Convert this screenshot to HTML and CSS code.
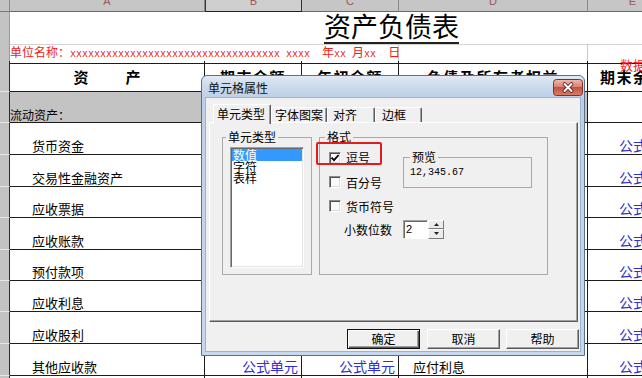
FILE: index.html
```html
<!DOCTYPE html>
<html lang="zh-CN">
<head>
<meta charset="utf-8">
<title>资产负债表</title>
<link rel="stylesheet" href="styles.css">
</head>
<body>
<div class="sheet">
  <div class="row hdr">
    <div class="corner"></div>
    <div class="ch"><span>A</span></div>
    <div class="ch ch-sel"><span>B</span></div>
    <div class="ch"><span>C</span></div>
    <div class="ch"><span>D</span></div>
    <div class="ch"><span>E</span></div>
  </div>
  <div class="row r-title">
    <div class="rh rh-top"></div>
    <div class="title-cell"><span class="title">资产负债表</span></div>
  </div>
  <div class="row r-unit">
    <div class="rh rh-top"></div>
    <div class="unit-cell">单位名称：<span class="mono">xxxxxxxxxxxxxxxxxxxxxxxxxxxxxxxxxxx xxxx  </span>年<span class="mono">xx </span>月<span class="mono">xx  </span>日</div>
    <div class="gc"></div>
    <div class="gc gc-e"></div>
  </div>
  <div class="row r-head">
    <div class="rh"></div>
    <div class="hc hc-asset"><span>资</span><span>产</span></div>
    <div class="hc">期末余额</div>
    <div class="hc">年初余额</div>
    <div class="hc">负债及所有者权益</div>
    <div class="hc hc-e">期末余额<span class="tag">数据</span></div>
  </div>
  <div class="row r-sec">
    <div class="rh"></div>
    <div class="sec">流动资产：</div>
    <div class="c c-e"></div>
  </div>
  <div class="row d h32">
    <div class="rh"></div>
    <div class="c name">货币资金</div>
    <div class="c num"></div>
    <div class="c num"></div>
    <div class="c name2"></div>
    <div class="c num c-e">公式单元</div>
  </div>
  <div class="row d h32">
    <div class="rh"></div>
    <div class="c name">交易性金融资产</div>
    <div class="c num"></div>
    <div class="c num"></div>
    <div class="c name2"></div>
    <div class="c num c-e">公式单元</div>
  </div>
  <div class="row d h31">
    <div class="rh"></div>
    <div class="c name">应收票据</div>
    <div class="c num"></div>
    <div class="c num"></div>
    <div class="c name2"></div>
    <div class="c num c-e">公式单元</div>
  </div>
  <div class="row d h32">
    <div class="rh"></div>
    <div class="c name">应收账款</div>
    <div class="c num"></div>
    <div class="c num"></div>
    <div class="c name2"></div>
    <div class="c num c-e">公式单元</div>
  </div>
  <div class="row d h31">
    <div class="rh"></div>
    <div class="c name">预付款项</div>
    <div class="c num"></div>
    <div class="c num"></div>
    <div class="c name2"></div>
    <div class="c num c-e">公式单元</div>
  </div>
  <div class="row d h31">
    <div class="rh"></div>
    <div class="c name">应收利息</div>
    <div class="c num"></div>
    <div class="c num"></div>
    <div class="c name2"></div>
    <div class="c num c-e">公式单元</div>
  </div>
  <div class="row d h32">
    <div class="rh"></div>
    <div class="c name">应收股利</div>
    <div class="c num"></div>
    <div class="c num"></div>
    <div class="c name2"></div>
    <div class="c num c-e">公式单元</div>
  </div>
  <div class="row d h32">
    <div class="rh"></div>
    <div class="c name">其他应收款</div>
    <div class="c num">公式单元</div>
    <div class="c num">公式单元</div>
    <div class="c name2">应付利息</div>
    <div class="c num c-e">公式单元</div>
  </div>
  <div class="row d h10">
    <div class="rh"></div>
    <div class="c"></div>
    <div class="c"></div>
    <div class="c"></div>
    <div class="c"></div>
    <div class="c c-e"></div>
  </div>
</div>

<div class="dlg">
  <div class="dlg-title">
    <span class="dlg-caption">单元格属性</span>
    <span class="dlg-close">
      <svg width="30" height="17" viewBox="0 0 30 17">
        <defs>
          <linearGradient id="cg" x1="0" y1="0" x2="0" y2="1">
            <stop offset="0" stop-color="#eebcb0"/>
            <stop offset="0.45" stop-color="#d98474"/>
            <stop offset="0.5" stop-color="#c5503f"/>
            <stop offset="1" stop-color="#d7806b"/>
          </linearGradient>
        </defs>
        <rect x="0.5" y="0.5" width="29" height="16" rx="3" fill="url(#cg)" stroke="#7d3025"/>
        <path d="M11.5 5 L18.5 12 M18.5 5 L11.5 12" stroke="#5c1f18" stroke-width="3.8" stroke-linecap="round"/>
        <path d="M11.5 5 L18.5 12 M18.5 5 L11.5 12" stroke="#fff" stroke-width="2" stroke-linecap="round"/>
      </svg>
    </span>
  </div>
  <div class="dlg-client">
    <div class="tabs">
      <div class="tab sel t1">单元类型</div>
      <div class="tab t2">字体图案</div>
      <div class="tab t3">对齐</div>
      <div class="tab t4">边框</div>
    </div>
    <div class="panel">
      <fieldset class="grp g-type">
        <legend>单元类型</legend>
        <div class="list">
          <div class="li sel">数值</div>
          <div class="li">字符</div>
          <div class="li">表样</div>
        </div>
      </fieldset>
      <fieldset class="grp g-fmt">
        <legend>格式</legend>
        <div class="fmt-top">
          <div class="checks">
            <div class="chk first">
              <span class="hl"></span>
              <span class="cb"><svg width="10" height="10" viewBox="0 0 10 10"><path d="M1.5 4.6 L4 7.2 L8.6 2" fill="none" stroke="#000" stroke-width="1.8"/></svg></span>逗号
            </div>
            <div class="chk"><span class="cb"></span>百分号</div>
            <div class="chk"><span class="cb"></span>货币符号</div>
          </div>
          <fieldset class="grp g-prev">
            <legend>预览</legend>
            <div class="pv">12,345.67</div>
          </fieldset>
        </div>
        <div class="dec">
          <span class="dec-label">小数位数</span>
          <div class="spin">
            <div class="spin-in">2</div>
            <div class="spin-btns">
              <div class="sb"><svg width="5" height="3" viewBox="0 0 5 3"><path d="M0 3 L2.5 0 L5 3 Z" fill="#222"/></svg></div>
              <div class="sb"><svg width="5" height="3" viewBox="0 0 5 3"><path d="M0 0 L2.5 3 L5 0 Z" fill="#222"/></svg></div>
            </div>
          </div>
        </div>
      </fieldset>
    </div>
    <div class="btns">
      <div class="btn def">确定</div>
      <div class="btn b2">取消</div>
      <div class="btn b3">帮助</div>
    </div>
  </div>
</div>
</body>
</html>
```
FILE: styles.css
```css
* { box-sizing: border-box; }
html, body { margin: 0; padding: 0; }
body {
  width: 642px;
  height: 378px;
  overflow: hidden;
  position: relative;
  background: #fff;
  font-family: "Noto Sans CJK SC", "Noto Sans", sans-serif;
  font-size: 12px;
  color: #000;
}

/* ---------- spreadsheet ---------- */
.sheet { width: 678px; }
.row {
  display: grid;
  grid-template-columns: 10px 195px 97px 97px 189px 90px;
}
.hdr { height: 12px; }
.r-title { height: 32px; }
.r-unit { height: 17px; }
.r-head { height: 31px; }
.r-sec { height: 31px; }
.h32 { height: 32px; }
.h31 { height: 31px; }
.h10 { height: 10px; }

.corner { background: #c3c3c3; border-right: 1px solid #8a8a8a; border-bottom: 1px solid #7a7a7a; }
.ch {
  background: #c6c6c6;
  border-right: 1px solid #8a8a8a;
  border-bottom: 1px solid #6a6a6a;
  display: flex;
  justify-content: center;
  align-items: flex-end;
  overflow: hidden;
  color: #9b5656;
  font-family: "Liberation Sans", sans-serif;
  font-size: 11px;
  line-height: 11px;
}
.ch span { margin-bottom: 4px; }
.ch-sel { background: #cfcfcf; border-left: 1px solid #333; border-right: 1px solid #333; border-bottom: 1px solid #222; }

.rh {
  background: #c3c3c3;
  border-bottom: 1px solid #e6e6e6;
  border-right: 1px solid #2a2a2a;
}
.rh-top { border-right-color: #9a9a9a; }

.title-cell {
  grid-column: 2 / -1;
  border-bottom: 1px solid #d2d2d2;
  padding-left: 314px;
  display: flex;
  align-items: flex-start;
}
.title {
  font-size: 27px;
  line-height: 28px;
  padding-bottom: 2px;
  border-bottom: 2px solid #222;
  white-space: nowrap;
}

.unit-cell {
  grid-column: 2 / 5;
  color: #ee1c1c;
  font-size: 12px;
  line-height: 16px;
  white-space: pre;
  border-right: 1px solid #c8c8c8;
  border-bottom: 1px solid #1c1c1c;
  overflow: visible;
}
.mono { font-family: "Liberation Mono", monospace; font-size: 10px; }
.gc { border-right: 1px solid #c8c8c8; border-bottom: 1px solid #1c1c1c; }
.gc-e { border-right: none; }

.hc {
  border-right: 1px solid #1c1c1c;
  border-bottom: 1px solid #1c1c1c;
  display: flex;
  align-items: center;
  justify-content: center;
  font-weight: 700;
  font-size: 15px;
  letter-spacing: 1.5px;
  white-space: nowrap;
  overflow: hidden;
}
.hc-asset { gap: 37px; letter-spacing: 0; }
.hc-e {
  justify-content: flex-start;
  padding-left: 12px;
  border-right: none;
  position: relative;
  overflow: visible;
}
.tag {
  position: absolute;
  left: 32px;
  top: -3px;
  color: #f02020;
  font-weight: 400;
  font-size: 13px;
  line-height: 14px;
  letter-spacing: 0;
}

.sec {
  grid-column: 2 / 6;
  background: #c3c3c3;
  border-right: 1px solid #1c1c1c;
  border-bottom: 1px solid #1c1c1c;
  display: flex;
  align-items: flex-end;
  font-size: 12px;
  line-height: 14px;
}

.c {
  border-right: 1px solid #1c1c1c;
  border-bottom: 1px solid #1c1c1c;
  display: flex;
  align-items: flex-end;
  white-space: nowrap;
  overflow: hidden;
  padding-bottom: 1px;
  font-size: 13px;
  line-height: 15px;
}
.c-e { border-right: none; }
.name { padding-left: 22px; }
.name2 { padding-left: 14px; }
.num {
  justify-content: flex-end;
  padding-right: 3px;
  color: #2f2fd2;
  font-size: 14px;
  line-height: 16px;
}

/* ---------- dialog ---------- */
.dlg {
  position: absolute;
  left: 201px;
  top: 75px;
  width: 384px;
  height: 281px;
  border: 1px solid #5a6f8a;
  border-radius: 6px 6px 0 0;
  background: linear-gradient(#e1e9f4 0, #ccdbec 10px, #bccfe6 22px, #c0d3ea 80px, #c6d8ed 100%);
  display: flex;
  flex-direction: column;
  z-index: 5;
}
.dlg-title {
  height: 22px;
  display: flex;
  align-items: flex-start;
  justify-content: space-between;
}
.dlg-caption {
  padding-left: 6px;
  line-height: 24px;
  font-size: 12px;
  color: #111;
}
.dlg-close {
  margin-top: 3px;
  margin-right: 1px;
  width: 30px;
  height: 17px;
  display: block;
}
.dlg-close svg { display: block; }

.dlg-client {
  margin: 0 4px 4px;
  height: 253px;
  background: #f0f0f0;
  padding: 6px 2px 0 3px;
  box-shadow: 0 0 0 1px #9db2cc;
}

.tabs {
  display: flex;
  align-items: flex-end;
  height: 18px;
  padding-left: 4px;
  position: relative;
  z-index: 1;
}
.tab {
  height: 15px;
  border-top: 1px solid #fff;
  border-left: 1px solid #fff;
  border-right: 1px solid #5a5a5a;
  box-shadow: inset -1px 0 0 #a0a0a0;
  border-radius: 2px 2px 0 0;
  font-size: 12px;
  line-height: 13px;
  padding-left: 3px;
  white-space: nowrap;
  background: #f0f0f0;
}
.tab.sel { height: 20px; margin-bottom: -2px; line-height: 18px; }
.t1 { width: 58px; }
.t2 { width: 56px; }
.t3 { width: 48px; padding-left: 5px; }
.t4 { width: 47px; padding-left: 6px; }

.panel {
  width: 369px;
  height: 200px;
  border: 1px solid;
  border-color: #fff #5a5a5a #5a5a5a #fff;
  box-shadow: inset -1px -1px 0 #a0a0a0;
  padding: 7px 0 0 12px;
  display: flex;
  gap: 7px;
  align-items: flex-start;
}

.grp {
  margin: 0;
  border: 1px solid #a9a9a9;
  min-width: 0;
  padding: 0;
}
.grp legend {
  padding: 0 2px;
  font-size: 12px;
  line-height: 14px;
}
.g-type { width: 90px; height: 145px; padding: 0 3px; }
.g-fmt { width: 229px; height: 145px; padding: 0 5px; }

.list {
  margin: 3px 0 0 4px;
  width: 74px;
  height: 121px;
  background: #fff;
  border: 1px solid;
  border-color: #a0a0a0 #fff #fff #a0a0a0;
  box-shadow: inset 1px 1px 0 #696969, inset -1px -1px 0 #e3e3e3;
  padding: 1px;
}
.li {
  height: 11px;
  line-height: 12px;
  font-size: 12px;
  padding-left: 1px;
  white-space: nowrap;
}
.li.sel { height: 12px; background: #3399ff; color: #fff; }

.fmt-top { display: flex; padding-top: 1px; }
.checks { width: 78px; padding-left: 4px; }
.chk {
  height: 24px;
  display: flex;
  align-items: center;
  font-size: 12px;
  white-space: nowrap;
  position: relative;
}
.chk.first { height: 25px; }
.cb {
  width: 12px;
  height: 12px;
  background: #fafafa;
  border: 1px solid;
  border-color: #8a8a8a #fff #fff #8a8a8a;
  box-shadow: inset 1px 1px 0 #505050, inset -1px -1px 0 #dcdcdc;
  margin-right: 5px;
  display: inline-flex;
  align-items: center;
  justify-content: center;
  flex: none;
}
.cb svg { display: block; }
.hl {
  position: absolute;
  left: -13px;
  top: -3px;
  width: 66px;
  height: 23px;
  border: 2px solid #e21c1c;
  border-radius: 2px;
}

.g-prev {
  width: 129px;
  height: 38px;
  padding: 2px 6px 0;
  margin-top: 5px;
}
.pv {
  font-family: "Liberation Mono", monospace;
  font-size: 10px;
  line-height: 14px;
}

.dec {
  display: flex;
  align-items: center;
  height: 22px;
  padding-left: 19px;
}
.dec-label { margin-right: 11px; font-size: 12px; }
.spin { display: flex; height: 19px; }
.spin-in {
  width: 25px;
  background: #fff;
  border: 1px solid;
  border-color: #a0a0a0 #fff #fff #a0a0a0;
  box-shadow: inset 1px 1px 0 #696969;
  font-family: "Liberation Sans", sans-serif;
  font-size: 11px;
  line-height: 16px;
  padding-left: 2px;
}
.spin-btns { width: 16px; display: flex; flex-direction: column; }
.sb {
  flex: 1;
  background: #ececec;
  border: 1px solid;
  border-color: #fff #7a7a7a #7a7a7a #fff;
  display: flex;
  align-items: center;
  justify-content: center;
}
.sb svg { display: block; }

.btns {
  display: flex;
  justify-content: flex-end;
  margin: 7px -1px 0 0;
}
.btn {
  width: 73px;
  height: 20px;
  border: 1px solid;
  border-color: #fff #5a5a5a #5a5a5a #fff;
  box-shadow: inset -1px -1px 0 #a0a0a0;
  background: #f0f0f0;
  font-size: 12px;
  line-height: 18px;
  text-align: center;
}
.btn.def {
  border: 1px solid #111;
  box-shadow: inset 1px 1px 0 #fff, inset -1px -1px 0 #5a5a5a, inset -2px -2px 0 #a0a0a0;
}
.b2 { margin-left: 7px; }
.b3 { margin-left: 6px; }
```
